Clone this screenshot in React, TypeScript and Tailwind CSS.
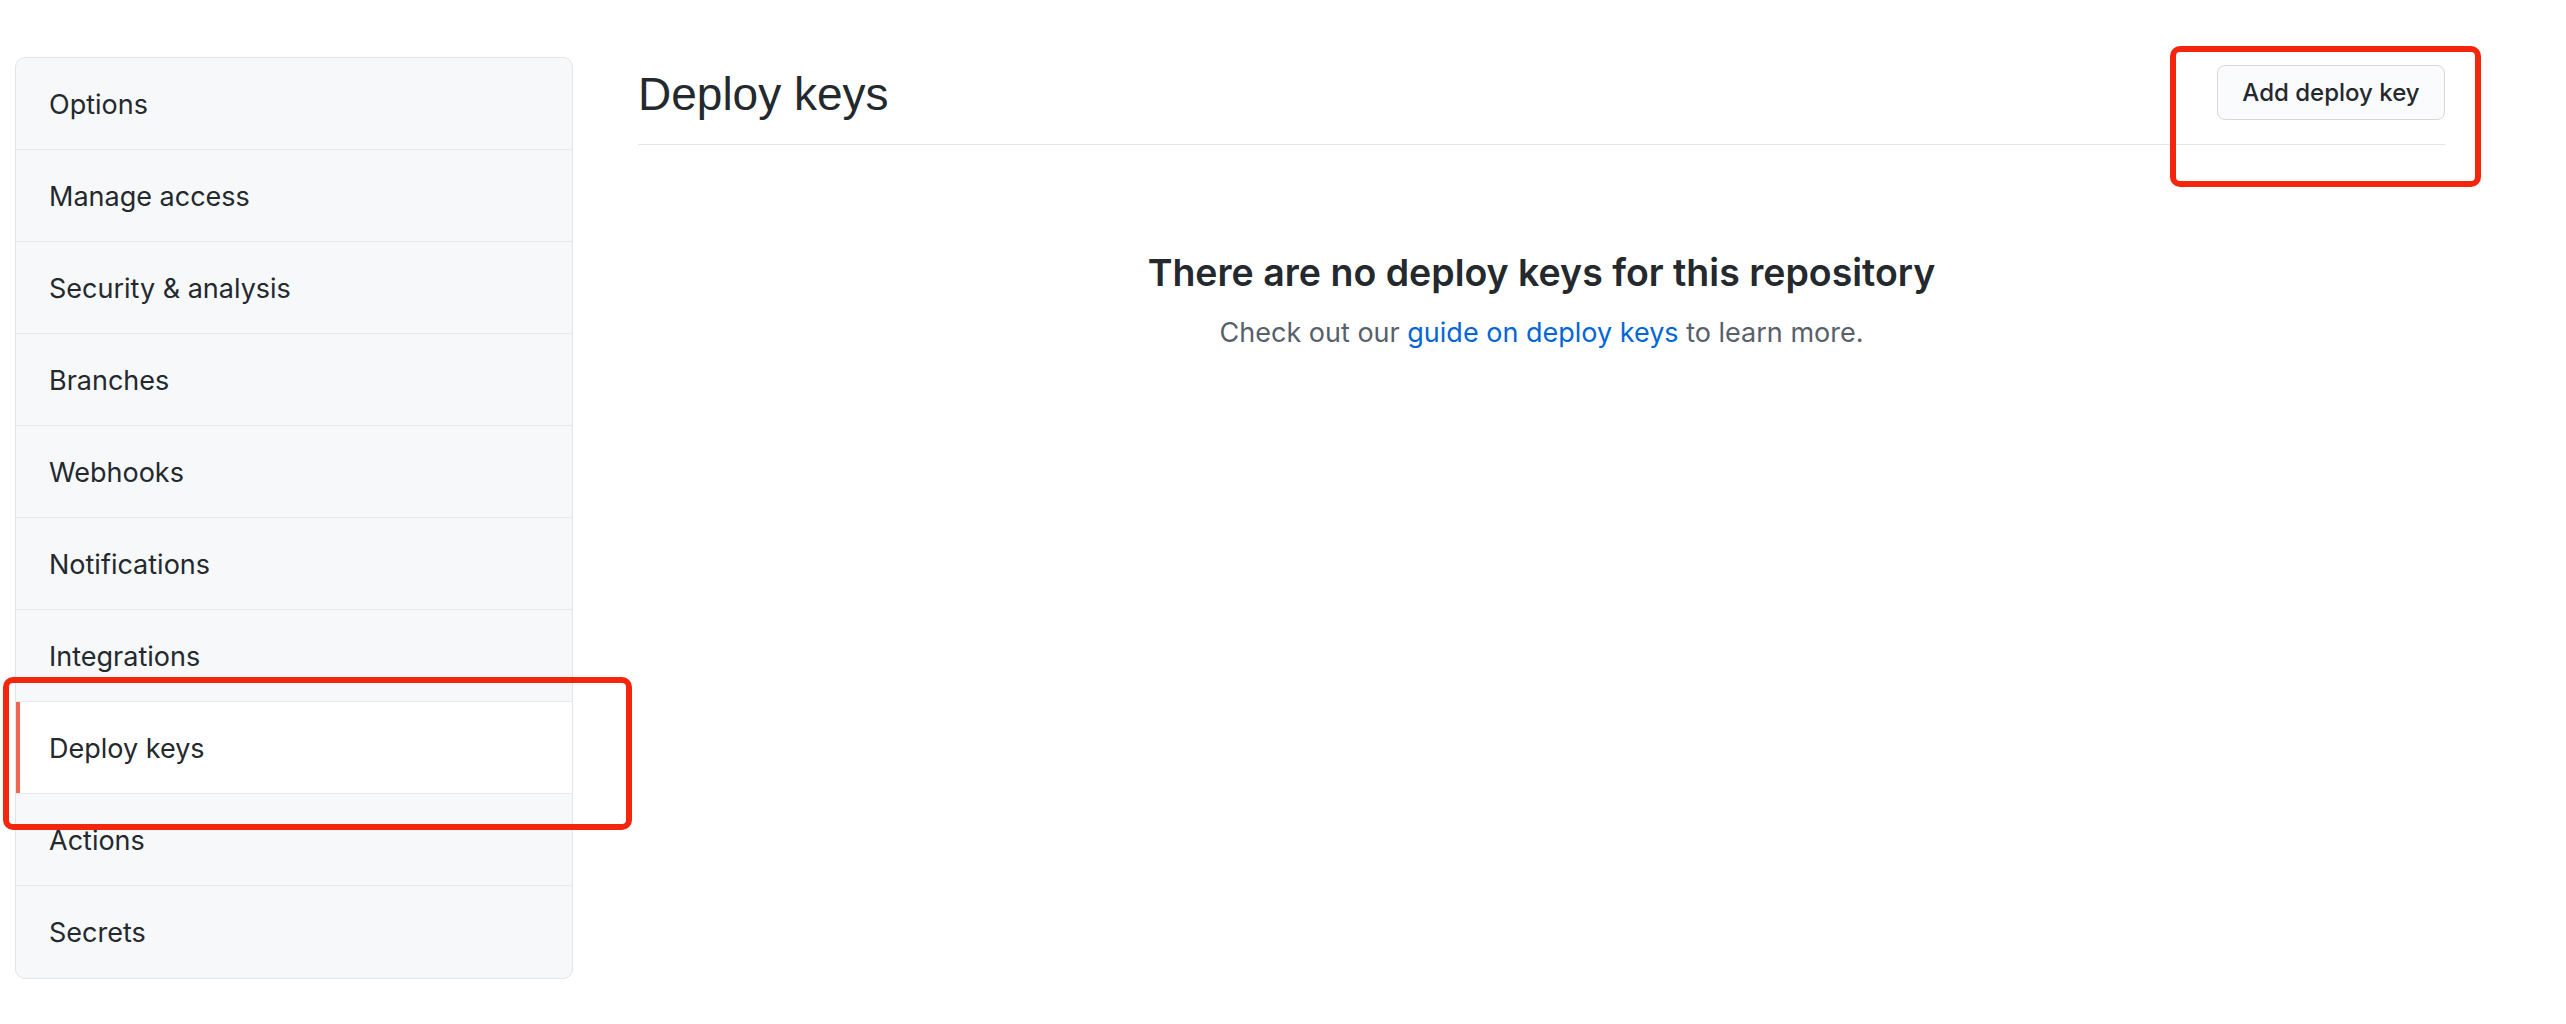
import React from "react";

const menuItems = [
  "Options",
  "Manage access",
  "Security & analysis",
  "Branches",
  "Webhooks",
  "Notifications",
  "Integrations",
  "Deploy keys",
  "Actions",
  "Secrets",
];

const active = "Deploy keys";

export default function App() {
  return (
    <div className="relative min-h-[1024px] w-full bg-white font-['Inter',sans-serif] text-[#24292e]">
      <div className="flex items-start gap-[65px] pl-[15px] pr-[121px] pt-[57px]">
        {/* Sidebar */}
        <nav className="w-[558px] shrink-0 overflow-hidden rounded-[10px] border border-[#e1e4e8] bg-[#f6f8fa]">
          {menuItems.map((item, i) => {
            const isActive = item === active;
            return (
              <div
                key={item}
                className={`relative flex h-[92px] items-center pl-[33px] pt-[3px] text-[27px] ${
                  i < menuItems.length - 1 ? "border-b border-[#e6e8eb]" : ""
                } ${isActive ? "bg-white" : ""}`}
              >
                {isActive && (
                  <span className="absolute left-0 top-0 h-full w-[4px] bg-[#f26452]" />
                )}
                {item}
              </div>
            );
          })}
        </nav>

        {/* Main */}
        <main className="flex-1">
          <div className="flex items-center justify-between border-b border-[#e1e4e8] pb-[24px] pt-[8px]">
            <h2 className="pt-[3px] font-['Liberation_Sans',Arial,sans-serif] text-[46px] font-normal leading-none text-[#24292e]">
              Deploy keys
            </h2>
            <button className="h-[55px] w-[228px] rounded-[8px] border border-[#ddd5d5] bg-[#fafbfc] text-[24px] font-medium text-[#24292e]">
              Add deploy key
            </button>
          </div>

          <div className="mt-[104px] flex flex-col items-center">
            <h3 className="text-[37.5px] font-semibold leading-[48px]">
              There are no deploy keys for this repository
            </h3>
            <p className="mt-[14px] text-[27px] leading-[44px] text-[#586069]">
              Check out our{" "}
              <a href="#" className="text-[#0366d6]">
                guide on deploy keys
              </a>{" "}
              to learn more.
            </p>
          </div>
        </main>
      </div>

      {/* Red annotation boxes */}
      <div className="pointer-events-none absolute left-[2170px] top-[46px] h-[141px] w-[311px] rounded-[10px] border-[6px] border-[#f3260d]" />
      <div className="pointer-events-none absolute left-[3px] top-[677px] h-[153px] w-[629px] rounded-[10px] border-[6px] border-[#f3260d]" />
    </div>
  );
}
